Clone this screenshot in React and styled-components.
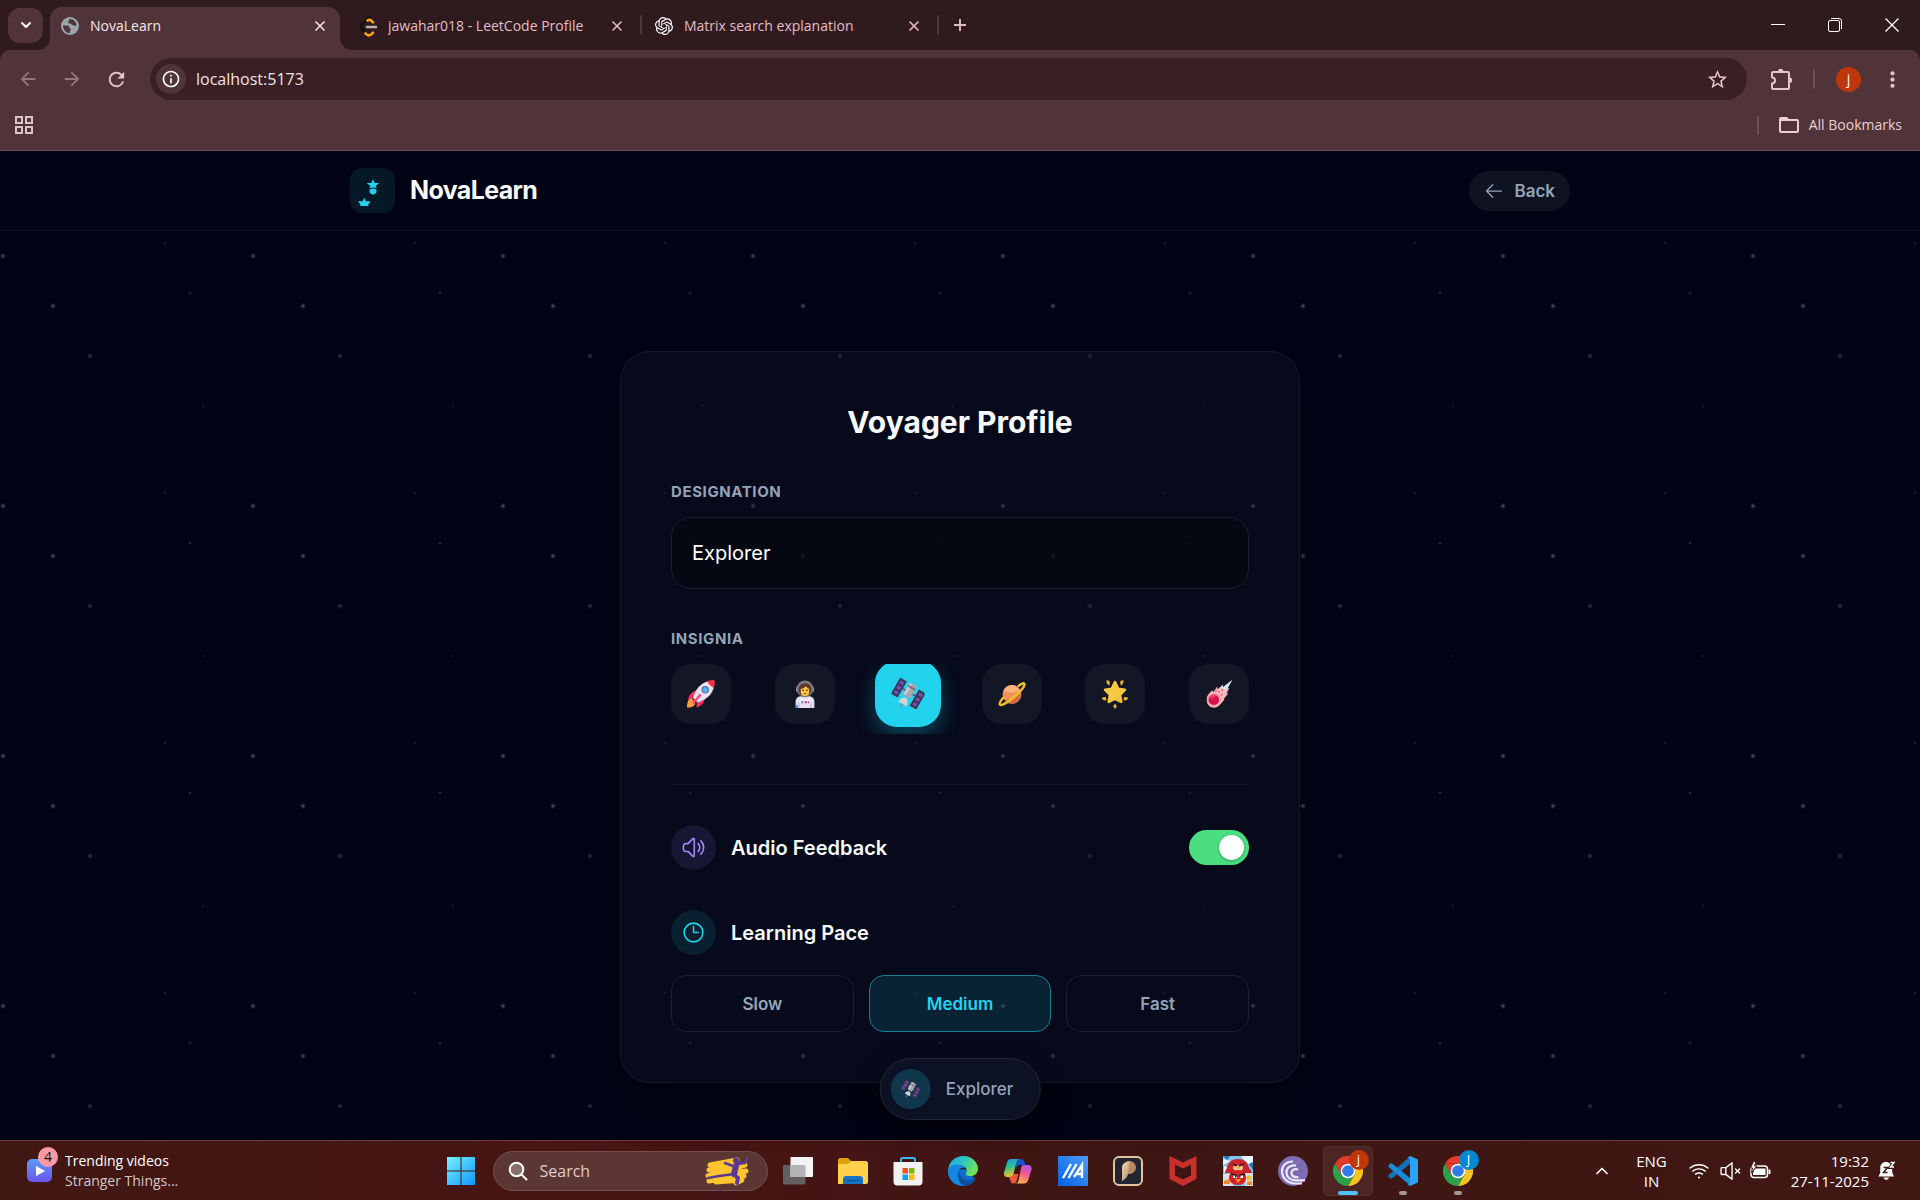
import * as React from 'react'
import styled, { createGlobalStyle, css } from 'styled-components'
import { X, Plus, ChevronDown, ChevronUp } from 'lucide-react'
import {
  MdArrowBack,
  MdArrowForward,
  MdRefresh,
  MdInfoOutline,
  MdStarOutline,
  MdMoreVert,
  MdFolderOpen,
} from 'react-icons/md'
import { SiOpenai } from 'react-icons/si'
import { HiOutlineArrowLeft, HiOutlineSpeakerWave, HiOutlineClock } from 'react-icons/hi2'
import { PiWifiHigh, PiSpeakerX } from 'react-icons/pi'

const UI_FONT = `'Open Sans', 'Noto Sans', sans-serif`
const APP_FONT = `Inter, sans-serif`

const GlobalStyle = createGlobalStyle`
  * {
    box-sizing: border-box;
  }
  body {
    margin: 0;
    background: #020415;
  }
  button,
  input {
    font: inherit;
    color: inherit;
  }
  button {
    padding: 0;
    border: 0;
    background: none;
    cursor: pointer;
  }
  svg {
    display: block;
    flex-shrink: 0;
  }
`

const Desktop = styled.div`
  display: flex;
  flex-direction: column;
  min-height: 100vh;
`

/* ---------- browser chrome ---------- */

const TabStrip = styled.div`
  display: flex;
  align-items: center;
  height: 50px;
  padding-left: 8px;
  background: #2f1a1e;
  color: #e5bcc4;
  font: 14px/20px ${UI_FONT};
`

const TabSearch = styled.button`
  display: grid;
  place-items: center;
  width: 35px;
  height: 35px;
  margin-right: 7px;
  border-radius: 12px;
  background: #50343a;
  color: #fff;
`

const Tab = styled.div`
  position: relative;
  display: flex;
  align-items: center;
  gap: 11px;
  flex: 0 1 ${({ $width }) => $width}px;
  height: 43px;
  padding: 0 12px 6px ${({ $inset }) => $inset}px;
  align-self: flex-end;
  ${({ $active }) =>
    $active &&
    css`
      color: #f6e6e9;
      background: #50343a;
      border-radius: 12px 12px 0 0;
      &::before,
      &::after {
        content: '';
        position: absolute;
        bottom: 0;
        width: 12px;
        height: 12px;
      }
      &::before {
        right: 100%;
        background: radial-gradient(circle at 0 0, transparent 12px, #50343a 12px);
      }
      &::after {
        left: 100%;
        background: radial-gradient(circle at 100% 0, transparent 12px, #50343a 12px);
      }
    `}
  > span {
    flex: 1;
    overflow: hidden;
    white-space: nowrap;
  }
`

const TabDivider = styled.i`
  width: 2px;
  height: 20px;
  margin-left: 3px;
  border-radius: 1px;
  background: #50343a;
`

const NewTab = styled.button`
  margin-left: 12px;
`

const WindowControls = styled.div`
  display: flex;
  align-self: stretch;
  margin-left: auto;
  color: #fff;
  > button {
    display: grid;
    place-items: center;
    width: 57px;
  }
`

const ToolbarBackdrop = styled.div`
  background: #2f1a1e;
`

const Toolbar = styled.div`
  border-radius: 10px 10px 0 0;
  border-bottom: 1px solid #654c50;
  background: #50343a;
  color: #e9c3ca;
`

const AddressRow = styled.div`
  display: flex;
  align-items: center;
  height: 58px;
  padding: 0 15px 0 17px;
`

const NavButton = styled.button`
  margin-right: 22px;
  opacity: ${({ disabled }) => (disabled ? 0.45 : 1)};
`

const Omnibox = styled.label`
  display: flex;
  align-items: center;
  flex: 1;
  height: 42px;
  padding: 0 18px 0 6px;
  border-radius: 21px;
  background: #382025;
  > input {
    flex: 1;
    min-width: 0;
    padding: 0 10px;
    border: 0;
    outline: 0;
    background: none;
    color: #f2e2e5;
    font: 16px/24px ${UI_FONT};
  }
`

const SiteInfo = styled.span`
  display: grid;
  place-items: center;
  width: 30px;
  height: 30px;
  border-radius: 50%;
  background: #50343a;
  color: #fff;
`

const ExtensionsButton = styled.button`
  margin: 0 20px 0 22px;
`

const ToolbarDivider = styled.i`
  width: 2px;
  height: 20px;
  border-radius: 1px;
  background: #6e4d54;
`

const ProfileButton = styled.button`
  width: 25px;
  height: 25px;
  margin: 0 19px 0 21px;
  border-radius: 50%;
  background: #bf360c;
  color: #fff;
  font: 14px/22px ${UI_FONT};
`

const BookmarkRow = styled.div`
  display: flex;
  align-items: center;
  height: 42px;
  padding: 0 18px 8px 14px;
  font: 14px/20px ${UI_FONT};
  color: #eacfd4;
  > i {
    margin: 0 18px 0 auto;
  }
  > button {
    display: flex;
    align-items: center;
    gap: 8px;
  }
`

const GlobeIcon = () => (
  <svg width="18" height="18" viewBox="0 0 18 18">
    <circle cx="9" cy="9" r="9" fill="#9aa5ac" />
    <path
      fill="#50343a"
      d="M2 8.500h4.500c1.500 0 1.800 1 1.800 2s1.500.6 1.500 1.800-1 1.600-1 3.900C4.800 16 2 12.500 2 8.500zM8 2c.8 1.500 0 2.200-1 2.600 0 1.400.6 1.800 2 1.800 1.600 0 1.200 1.600 2.600 1.600s1.600 1 3.800 1c.4-3.500-2.500-7.200-7.400-7z"
    />
  </svg>
)

const LeetCodeIcon = () => (
  <svg width="18" height="22" viewBox="0 0 18 22" fill="none" strokeWidth="2.600" strokeLinecap="round">
    <path stroke="#111" d="M11 1.500L3 9.500c-1.500 1.500-1.500 3.500 0 5l3 3" />
    <path stroke="#ffa116" d="M8.500 5.500c1.500-1 2.800-.8 4 .4l1.500 1.500M6.500 18.500c2 2.200 4.200 2.200 6 .6l1.500-1.500" />
    <path stroke="#b9b5b5" d="M8 12h9" />
  </svg>
)

const RestoreIcon = () => (
  <svg width="14" height="14" viewBox="0 0 14 14" fill="none" stroke="#fff">
    <rect x=".5" y="2.500" width="11" height="11" rx="1.500" />
    <path d="M3 .5h8a2.500 2.500 0 0 1 2.500 2.500v8" />
  </svg>
)

const AppsIcon = () => (
  <svg width="20" height="20" viewBox="0 0 20 20" fill="none" stroke="#dcc3c8" strokeWidth="2">
    <path d="M2 2h6v6H2zM12 2h6v6h-6zM2 12h6v6H2zM12 12h6v6h-6z" />
  </svg>
)

const PuzzleIcon = () => (
  <svg width="24" height="24" viewBox="0 0 24 24">
    <path
      fill="none"
      stroke="currentColor"
      strokeWidth="2"
      strokeLinejoin="round"
      d="M4 5h15a1 1 0 0 1 1 1v15a1 1 0 0 1-1 1H4a1 1 0 0 1-1-1v-4.500a3 3 0 0 0 0-6V6a1 1 0 0 1 1-1z"
    />
    <path fill="currentColor" d="M9 4.500a2.700 2.700 0 0 1 5.400 0zM20.500 10.500a2.700 2.700 0 0 1 0 5.400z" />
  </svg>
)

const CloseTab = () => (
  <button aria-label="Close tab">
    <X size={16} strokeWidth={2.5} />
  </button>
)

const Browser = () => (
  <React.Fragment>
    <TabStrip>
      <TabSearch aria-label="Search tabs">
        <ChevronDown size={16} strokeWidth={3} />
      </TabSearch>
      <Tab $active $width={290} $inset={11}>
        <GlobeIcon />
        <span>NovaLearn</span>
        <CloseTab />
      </Tab>
      <Tab $width={297} $inset={19}>
        <LeetCodeIcon />
        <span>jawahar018 - LeetCode Profile</span>
        <CloseTab />
      </Tab>
      <TabDivider />
      <Tab $width={292} $inset={13}>
        <SiOpenai size={18} color="#fff" />
        <span>Matrix search explanation</span>
        <CloseTab />
      </Tab>
      <TabDivider />
      <NewTab aria-label="New tab">
        <Plus size={18} strokeWidth={2.5} />
      </NewTab>
      <WindowControls>
        <button aria-label="Minimize">
          <svg width="14" height="2">
            <path d="M0 .5h14" stroke="#fff" />
          </svg>
        </button>
        <button aria-label="Restore">
          <RestoreIcon />
        </button>
        <button aria-label="Close">
          <svg width="14" height="14">
            <path d="M.5 .5l13 13M13.500 .5l-13 13" stroke="#fff" strokeWidth="1.300" />
          </svg>
        </button>
      </WindowControls>
    </TabStrip>
    <ToolbarBackdrop>
      <Toolbar>
        <AddressRow>
          <NavButton disabled aria-label="Back">
            <MdArrowBack size={22} />
          </NavButton>
          <NavButton disabled aria-label="Forward">
            <MdArrowForward size={22} />
          </NavButton>
          <NavButton aria-label="Reload">
            <MdRefresh size={23} />
          </NavButton>
          <Omnibox>
            <SiteInfo>
              <MdInfoOutline size={20} />
            </SiteInfo>
            <input aria-label="Address" defaultValue="localhost:5173" />
            <MdStarOutline size={23} />
          </Omnibox>
          <ExtensionsButton aria-label="Extensions">
            <PuzzleIcon />
          </ExtensionsButton>
          <ToolbarDivider />
          <ProfileButton>j</ProfileButton>
          <button aria-label="Menu">
            <MdMoreVert size={25} />
          </button>
        </AddressRow>
        <BookmarkRow>
          <button aria-label="Apps">
            <AppsIcon />
          </button>
          <ToolbarDivider />
          <button>
            <MdFolderOpen size={24} />
            All Bookmarks
          </button>
        </BookmarkRow>
      </Toolbar>
    </ToolbarBackdrop>
  </React.Fragment>
)

/* ---------- NovaLearn page ---------- */

const Page = styled.div`
  position: relative;
  flex: 1;
  display: flex;
  flex-direction: column;
  font: 17px/26px ${APP_FONT};
  color: #f8fafc;
  background:
    radial-gradient(3px 3px at 53px 155px, rgba(255, 255, 255, 0.3), transparent),
    radial-gradient(3px 3px at 3px 105px, rgba(255, 255, 255, 0.3), transparent),
    radial-gradient(3px 3px at 90px 205px, rgba(255, 255, 255, 0.2), transparent),
    radial-gradient(2px 1px at 190px 142px, rgba(255, 255, 255, 0.3), transparent),
    radial-gradient(2px 1px at 165px 92px, rgba(255, 255, 255, 0.2), transparent),
    radial-gradient(1px 2px at 203px 5px, rgba(255, 255, 255, 0.15), transparent),
    #020415;
  background-size: 250px 250px;
`

const Header = styled.header`
  border-bottom: 1px solid #0e111f;
  background: #020415;
  > div {
    display: flex;
    align-items: center;
    justify-content: space-between;
    max-width: 1220px;
    height: 79px;
    margin: 0 auto;
  }
`

const Brand = styled.a`
  display: flex;
  align-items: center;
  gap: 15px;
  color: #f8fafc;
  font-size: 25px;
  line-height: 35px;
  font-weight: 700;
  letter-spacing: -0.025em;
  text-decoration: none;
`

const BackButton = styled.button`
  display: flex;
  align-items: center;
  gap: 10px;
  height: 40px;
  padding: 0 15px;
  border-radius: 20px;
  background: #0f121f;
  color: #94a3b8;
  font-weight: 600;
`

const Main = styled.main`
  flex: 1;
  padding: 120px 24px 56px;
`

const Card = styled.section`
  max-width: 680px;
  margin: 0 auto;
  padding: 50px;
  border: 1px solid rgba(255, 255, 255, 0.06);
  border-radius: 30px;
  background: rgba(20, 28, 46, 0.27);
  box-shadow: 0 25px 50px -12px rgba(0, 0, 0, 0.4);
  > h1 {
    margin: 0 0 40px;
    font-size: 30px;
    line-height: 40px;
    font-weight: 700;
    text-align: center;
  }
`

const FieldLabel = styled.label`
  display: block;
  margin-bottom: 15px;
  color: #94a3b8;
  font-size: 15px;
  line-height: 20px;
  font-weight: 700;
  letter-spacing: 0.04em;
  text-transform: uppercase;
`

const NameInput = styled.input`
  display: block;
  width: 100%;
  height: 72px;
  margin-bottom: 40px;
  padding: 0 20px;
  border: 1px solid #1c1f2b;
  border-radius: 20px;
  outline: 0;
  background: rgba(5, 6, 14, 0.65);
  color: #fff;
  font-size: 20px;
`

const InsigniaRow = styled.div`
  display: flex;
  justify-content: space-between;
  padding-bottom: 10px;
  margin-bottom: 50px;
  overflow: hidden;
`

const Insignia = styled.button`
  display: grid;
  place-items: center;
  width: 60px;
  height: 60px;
  border-radius: 20px;
  background: #131725;
  ${({ $selected }) =>
    $selected &&
    css`
      transform: scale(1.1);
      background: #22d3ee;
      box-shadow: 0 8px 18px rgba(34, 211, 238, 0.3);
    `}
`

const Settings = styled.div`
  display: grid;
  gap: 40px;
  padding-top: 40px;
  border-top: 1px solid #121726;
`

const SettingRow = styled.div`
  display: flex;
  align-items: center;
  gap: 15px;
  font-size: 20px;
  line-height: 28px;
  font-weight: 600;
  > label {
    flex: 1;
  }
`

const IconDisc = styled.span`
  display: grid;
  place-items: center;
  width: 45px;
  height: 45px;
  border-radius: 50%;
  color: ${({ $color }) => $color};
  background: ${({ $bg }) => $bg};
`

const Toggle = styled.input`
  appearance: none;
  width: 60px;
  height: 35px;
  margin: 0;
  padding: 5px;
  border-radius: 18px;
  background: #334155;
  cursor: pointer;
  &::before {
    content: '';
    display: block;
    width: 25px;
    height: 25px;
    border-radius: 50%;
    background: #fff;
    box-shadow: 0 1px 3px rgba(0, 0, 0, 0.3);
  }
  &:checked {
    background: #4ade80;
  }
  &:checked::before {
    margin-left: 25px;
  }
`

const PaceOptions = styled.div`
  display: grid;
  grid-template-columns: repeat(3, 1fr);
  gap: 15px;
  margin-top: 20px;
`

const PaceButton = styled.button`
  height: 57px;
  border: 1px solid ${({ $selected }) => ($selected ? '#157f93' : '#1c202f')};
  border-radius: 15px;
  background: ${({ $selected }) => ($selected ? 'rgba(34, 211, 238, 0.12)' : 'transparent')};
  color: ${({ $selected }) => ($selected ? '#22d3ee' : '#94a3b8')};
  font-weight: 600;
`

/* floats over the bottom edge of the card */
const ProfilePill = styled.div`
  position: absolute;
  bottom: 20px;
  left: 50%;
  transform: translateX(-50%);
  display: flex;
  align-items: center;
  gap: 15px;
  height: 62px;
  padding: 0 26px 0 10px;
  border: 1px solid #20253a;
  border-radius: 31px;
  background: #0c1124;
  box-shadow: 0 10px 25px rgba(0, 0, 0, 0.5);
  color: #94a3b8;
  font-weight: 500;
  > ${IconDisc} {
    width: 40px;
    height: 40px;
  }
`

const LogoMark = () => (
  <svg width="45" height="45" viewBox="0 0 45 45" fill="#22d3ee">
    <rect width="45" height="45" rx="12" fill="#041827" />
    <path d="M23 11l1.700 4h4.600l-3.600 2.900 1 2.600c-2.200-1.300-5.200-1.300-7.400 0l1-2.600-3.600-2.900h4.600z" />
    <path d="M23 20.500c1.300 0 2.500.5 3.500 1.500.3 2.300-1.200 4.500-3.500 4.500s-3.800-2.200-3.500-4.500c1-1 2.200-1.500 3.500-1.500z" />
    <path d="M14.300 29.700l1.700 3.600h4.600l-2.200 3-.2 1.700h-7.800l-.2-1.700-2.200-3h4.600z" />
  </svg>
)

const Rocket = () => (
  <svg width="30" height="30" viewBox="0 0 32 32">
    <path fill="#ff9a3d" d="M6 20c-4 1.500-5 6-5 10.500 4 0 8-1 9-4.500z" />
    <path fill="#f92f60" d="M12 12c-6 1-8.500 5-10 10l6-2zM20 20c-.5 6-4 9-9 10.500l1-6.500z" />
    <path fill="#8a1f4f" d="M8 20l5 5-1.500 1-4-4z" />
    <path fill="#e9e4ef" d="M30 2C19 1.500 11 8 7.500 20l5 5C24 21 31 13 30 2z" />
    <path fill="#c5bdd0" d="M30 8c-1 8-8 14-18 16l.5 1C23 21.500 30 15 30 8z" />
    <path fill="#f92f47" d="M30.500 1.500c-3-.3-6 .1-8 1 1.500 3 4 5.500 7 7 1-2.500 1.300-5 1-8z" />
    <circle cx="20.500" cy="11.500" r="4" fill="#5d6b9c" />
    <circle cx="20.500" cy="11.500" r="2.800" fill="#4fb3f6" />
    <path fill="#ff4a7c" d="M14.500 15.500l2 2-8.500 9.500-1.500-1.500z" />
  </svg>
)

const Astronaut = () => (
  <svg width="30" height="30" viewBox="0 0 32 32">
    <path fill="#e6e0f3" d="M6 31v-7c0-3.500 3-5.500 6-5.500h8c3 0 6 2 6 5.500v7z" />
    <path fill="#cbc2de" d="M9.500 25v6M22.500 25v6" stroke="#b8aed0" />
    <rect x="6.500" y="7" width="19" height="8" rx="4" fill="#b9b0c4" />
    <circle cx="16" cy="10.500" r="9" fill="#7c7880" />
    <circle cx="16" cy="11.500" r="7" fill="#5a3528" />
    <path fill="#ffc83d" d="M11.500 10.500c2.500 0 4.500-1.500 5.500-3 .6 1.500 1.800 2.600 3.500 3v4c0 2.600-2 4-4.500 4s-4.500-1.400-4.500-4z" />
    <circle cx="14" cy="12" r=".9" fill="#402a32" />
    <circle cx="18" cy="12" r=".9" fill="#402a32" />
    <path d="M14.800 15.300c.8.700 1.600.7 2.400 0" stroke="#d52c4c" strokeWidth="1.300" fill="none" />
    <path fill="#f7f4fb" d="M10.500 20c3 2.500 8 2.500 11 0v5c-3 2-8 2-11 0z" />
    <path fill="#3f8ef0" d="M12 23.500h2V26h-2zM6 28h2.500v3H6z" />
    <path fill="#f2426b" d="M15.500 23.500H18V26h-2.500z" />
    <path fill="#8b5cf6" d="M19 23.500h1.500V26H19z" />
  </svg>
)

const Satellite = ({ size = 30 }) => (
  <svg width={size} height={size} viewBox="0 0 32 32">
    <g transform="rotate(30 16 16)">
      <path stroke="#5e5666" strokeWidth="1.500" d="M7 14h18" />
      <path fill="#403550" d="M1.500 6H9v18H1.500zM23 7h7.500v18H23z" />
      <path
        fill="#6d4fb8"
        d="M3.300 8h4v3.400h-4zM3.300 13.300h4v3.400h-4zM3.300 18.600h4V22h-4zM24.800 9h4v3.400h-4zM24.800 14.300h4v3.400h-4zM24.800 19.600h4V23h-4z"
      />
      <rect x="12" y="5" width="8" height="14" rx="1" fill="#a9a6ad" />
      <path fill="#c9c6cd" d="M12 6h3v12h-3z" />
      <path fill="#77747c" d="M12 8h8v2h-8z" />
      <path fill="#d3d0d8" d="M11.500 27c0-4 2-6.500 4.500-6.500s4.500 2.500 4.500 6.500z" />
      <path stroke="#8a8790" strokeWidth="1.500" d="M16 27v4" />
    </g>
  </svg>
)

const Planet = () => (
  <svg width="30" height="30" viewBox="0 0 32 32">
    <circle cx="16" cy="16.500" r="10" fill="#f3905a" />
    <path fill="#f9b27c" d="M7 12c2-4 7-6.500 11-5.300 3 1 5 3 6 5.300-5 3-11 4-17 0z" />
    <path fill="#d86b4a" d="M8 22c5 1 11-1 17-7 1 5-2 10-7 11.300-4 .7-8-1-10-4.300z" />
    <path
      fill="none"
      stroke="#f0c02c"
      strokeWidth="2.600"
      strokeLinecap="round"
      d="M23 7.500c3-2.500 5.200-3.600 6-2.600 1.600 1.700-3.300 8-10.500 14S4.600 28.900 3.200 27.300c-.9-1 .6-4 3.500-7.300"
    />
  </svg>
)

const GlowingStar = () => (
  <svg width="30" height="30" viewBox="0 0 32 32" strokeLinejoin="round">
    <path
      fill="#f6c945"
      stroke="#f6c945"
      strokeWidth="3"
      d="M16 3.500l3.300 7 7.200 1-5.300 5.300 1.400 7.400L16 20.800l-6.600 3.400 1.400-7.400L5.500 11.500l7.200-1z"
    />
    <path fill="#e2a52a" d="M16 20l6 4-1-6c2-2.200 4-4 5-6-1 5-4 6-5 8s-2 .5-5 0z" opacity=".6" />
    <path
      fill="#f0b429"
      d="M7 1l3.500 1.500L10 7C7.500 6 6.500 3.500 7 1zM25 1l-3.500 1.500L22 7c2.500-1 3.500-3.500 3-6zM2 20l4-1 1 3.500C4.500 23.500 2.500 22.500 2 20zM30 20l-4-1-1 3.500c2.500 1 4.500 0 5-2.500zM16 26l2 3-2 3-2-3z"
    />
  </svg>
)

const Comet = () => (
  <svg width="30" height="30" viewBox="0 0 32 32">
    <path
      fill="#f5b8bd"
      d="M3 21c0-4 4-7 6-9l1 2 4-6 .5 3L20 6v3l10-8-5 9 2-.5-3 6 2-.3-5 6 1 .3-5 6c-3 3.500-8 4-11 1.500-2-1.500-3-3.500-3-6z"
    />
    <path fill="#cfeaf3" d="M20 6v3l10-8-5 9-4 2-3-3z" />
    <circle cx="10.500" cy="22" r="7.300" fill="#f7a3a8" />
    <circle cx="10.500" cy="22" r="5.600" fill="#d6134f" />
    <path fill="#f23b62" d="M6 20c1-2.500 4-4 6.500-3C12 20 9 22 6 20z" />
    <path fill="#e8476c" d="M15 13h1.500v1.500H15zM18 16h1.500v1.500H18zM12 12h1.500v1.500H12zM19 11h1.500v1.500H19z" />
  </svg>
)

const INSIGNIA = [
  { name: 'Rocket', Icon: Rocket },
  { name: 'Astronaut', Icon: Astronaut },
  { name: 'Satellite', Icon: Satellite },
  { name: 'Planet', Icon: Planet },
  { name: 'Star', Icon: GlowingStar },
  { name: 'Comet', Icon: Comet },
]

const ProfilePage = () => {
  const [name, setName] = React.useState('Explorer')
  const [insignia, setInsignia] = React.useState('Satellite')
  const [audio, setAudio] = React.useState(true)
  const [pace, setPace] = React.useState('Medium')
  const { Icon: Current } = INSIGNIA.find(i => i.name === insignia)

  return (
    <Page>
      <Header>
        <div>
          <Brand href="#">
            <LogoMark />
            NovaLearn
          </Brand>
          <BackButton>
            <HiOutlineArrowLeft size={20} />
            Back
          </BackButton>
        </div>
      </Header>
      <Main>
        <Card>
          <h1>Voyager Profile</h1>
          <FieldLabel htmlFor="designation">Designation</FieldLabel>
          <NameInput
            id="designation"
            value={name}
            onChange={e => setName(e.target.value)}
          />
          <FieldLabel as="div" id="insignia">
            Insignia
          </FieldLabel>
          <InsigniaRow role="group" aria-labelledby="insignia">
            {INSIGNIA.map(({ name, Icon }) => (
              <Insignia
                key={name}
                aria-label={name}
                $selected={name === insignia}
                onClick={() => setInsignia(name)}
              >
                <Icon />
              </Insignia>
            ))}
          </InsigniaRow>
          <Settings>
            <SettingRow>
              <IconDisc $color="#a78bfa" $bg="#161733">
                <HiOutlineSpeakerWave size={25} />
              </IconDisc>
              <label htmlFor="audio">Audio Feedback</label>
              <Toggle
                id="audio"
                type="checkbox"
                checked={audio}
                onChange={e => setAudio(e.target.checked)}
              />
            </SettingRow>
            <div>
              <SettingRow>
                <IconDisc $color="#22d3ee" $bg="#082030">
                  <HiOutlineClock size={25} />
                </IconDisc>
                <span id="pace">Learning Pace</span>
              </SettingRow>
              <PaceOptions role="group" aria-labelledby="pace">
                {['Slow', 'Medium', 'Fast'].map(p => (
                  <PaceButton key={p} $selected={p === pace} onClick={() => setPace(p)}>
                    {p}
                  </PaceButton>
                ))}
              </PaceOptions>
            </div>
          </Settings>
        </Card>
      </Main>
      <ProfilePill>
        <IconDisc $bg="#10364c">
          <Current size={20} />
        </IconDisc>
        {name}
      </ProfilePill>
    </Page>
  )
}

/* ---------- taskbar ---------- */

const Bar = styled.footer`
  display: grid;
  grid-template-columns: 1fr auto 1fr;
  align-items: center;
  height: 60px;
  padding: 0 24px 0 27px;
  border-top: 1px solid #6a3d36;
  background: linear-gradient(90deg, #411713, #471414 35%, #3d1613 60%, #411713);
  color: #fff;
  font: 14px/20px ${UI_FONT};
`

const Widget = styled.button`
  display: flex;
  align-items: center;
  gap: 13px;
  text-align: left;
  white-space: nowrap;
  small {
    display: block;
    font-size: 14px;
    color: #d8c6c4;
  }
`

const WidgetIcon = styled.span`
  position: relative;
  > b {
    position: absolute;
    top: -11px;
    right: -6px;
    width: 20px;
    height: 20px;
    border-radius: 50%;
    background: #ff99a4;
    color: #111;
    font-weight: 400;
    text-align: center;
  }
`

const Pinned = styled.div`
  display: flex;
  align-items: center;
  padding-right: 10px;
`

const PinnedApp = styled.button`
  position: relative;
  display: grid;
  place-items: center;
  width: 50px;
  height: 50px;
  margin-left: 5px;
  border-radius: 6px;
  ${({ $active }) =>
    $active &&
    css`
      background: #4d2623;
      box-shadow: inset 0 0 0 1px #57302d;
    `}
  ${({ $running, $active }) =>
    $running &&
    css`
      &::after {
        content: '';
        position: absolute;
        bottom: 1px;
        width: ${$active ? 20 : 8}px;
        height: 4px;
        border-radius: 2px;
        background: ${$active ? '#4cc2ff' : '#a89391'};
      }
    `}
`

const AccountBadge = styled.b`
  position: absolute;
  top: 4px;
  right: 4px;
  width: 20px;
  height: 20px;
  border-radius: 50%;
  background: ${({ $color }) => $color};
  color: #fff;
  font-size: 13px;
  font-weight: 400;
  line-height: 18px;
  text-align: center;
`

const SearchBox = styled.label`
  display: flex;
  align-items: center;
  gap: 12px;
  width: 275px;
  height: 40px;
  margin: 0 0 0 7px;
  padding: 0 17px 0 14px;
  border: 1px solid #73504d;
  border-radius: 20px;
  background: #5c3633;
  > input {
    flex: 1;
    min-width: 0;
    padding: 0;
    border: 0;
    outline: 0;
    background: none;
    font-size: 16px;
    &::placeholder {
      color: #dccfce;
    }
  }
`

const Tray = styled.div`
  display: flex;
  align-items: center;
  justify-content: flex-end;
  > * {
    margin-left: 9px;
  }
`

const Language = styled.button`
  margin: 0 12px 0 24px;
  font-size: 15px;
  line-height: 20px;
  text-align: center;
`

const Clock = styled.button`
  margin-left: 20px;
  font-size: 15px;
  line-height: 20px;
  text-align: right;
`

const WidgetGlyph = () => (
  <svg width="25" height="25" viewBox="0 0 25 25">
    <defs>
      <linearGradient id="wg" x2="0" y2="1">
        <stop stopColor="#5c9bff" />
        <stop offset="1" stopColor="#6a55f0" />
      </linearGradient>
    </defs>
    <rect y="1" width="25" height="23" rx="5" fill="url(#wg)" />
    <path fill="#fff" d="M9 8l9 5-9 5z" />
  </svg>
)

const StartGlyph = () => (
  <svg width="30" height="30" viewBox="0 0 30 30">
    <defs>
      <linearGradient id="start" gradientUnits="userSpaceOnUse" x1="0" y1="0" x2="30" y2="30">
        <stop stopColor="#7df3ff" />
        <stop offset="1" stopColor="#0a94ff" />
      </linearGradient>
    </defs>
    <path fill="url(#start)" d="M1 1h13.500v13.500H1zM15.500 1H29v13.500H15.500zM1 15.500h13.500V29H1zM15.500 15.500H29V29H15.500z" />
  </svg>
)

const SearchGlyph = () => (
  <svg width="20" height="20" viewBox="0 0 20 20" fill="none" stroke="#fff" strokeWidth="2" strokeLinecap="round">
    <circle cx="8.500" cy="8.500" r="6.800" fill="#8a6f6d" />
    <path d="M13.500 13.500l5 5" />
  </svg>
)

const KickGlyph = () => (
  <svg width="46" height="30" viewBox="0 0 46 30" strokeLinecap="round" strokeLinejoin="round">
    <path
      fill="none"
      stroke="#ffc42e"
      strokeWidth="5"
      d="M6 9L33 4 5 14l36-5L4 20l38-5L5 25l35-5-28 6 26-2-6 3"
    />
    <g stroke="#5b3a94" fill="none">
      <path strokeWidth="6" d="M32 10l-2 8" />
      <path strokeWidth="2.500" d="M34 8l7-1 2-5M29 10l-8-3M30 18l-15 2-11 2" />
      <path strokeWidth="4" d="M29 18l5 4-1 5" />
    </g>
    <circle cx="32" cy="4.500" r="3" fill="#5b3a94" />
  </svg>
)

const TaskViewGlyph = () => (
  <svg width="30" height="30" viewBox="0 0 30 30">
    <rect y="9" width="22.500" height="19.500" rx="1" fill="#626060" />
    <rect x="7.500" y="1" width="22.500" height="20" rx="1" fill="#f3f3f3" />
    <path fill="#b5b4b4" d="M7.500 9h15v12h-15z" />
  </svg>
)

const ExplorerGlyph = () => (
  <svg width="30" height="30" viewBox="0 0 30 30">
    <path fill="#e0a00c" d="M0 4c0-1 1-2 2-2h8l3 3h15v8H0z" />
    <path fill="#ffd04a" d="M0 8h10l3-3h15c1 0 2 1 2 2v19c0 1-1 2-2 2H0z" />
    <path fill="#1373c4" d="M5 28v-5c0-1.700 1.300-3 3-3h14c1.700 0 3 1.300 3 3v5z" />
    <path stroke="#0b4f91" d="M8.500 24.500h13" />
  </svg>
)

const StoreGlyph = () => (
  <svg width="30" height="30" viewBox="0 0 30 30">
    <path fill="none" stroke="#37b6ee" strokeWidth="2" d="M8 7V3.500C8 2.500 8.500 2 9.500 2h11c1 0 1.500.5 1.500 1.500V7" />
    <path fill="#f1f1f1" d="M.5 7c0-.8.5-1 1-1h27c.6 0 1 .3 1 1v18.500a4 4 0 0 1-4 4h-21a4 4 0 0 1-4-4z" />
    <path fill="#f25022" d="M9.500 12H15v5.500H9.500z" />
    <path fill="#7fba00" d="M16 12h5.500v5.500H16z" />
    <path fill="#00a4ef" d="M9.500 18.500H15V24H9.500z" />
    <path fill="#ffb900" d="M16 18.500h5.500V24H16z" />
  </svg>
)

const EdgeGlyph = () => (
  <svg width="30" height="30" viewBox="0 0 30 30">
    <defs>
      <linearGradient id="edge" x2="1" y2=".4">
        <stop stopColor="#1ba5e0" />
        <stop offset=".5" stopColor="#2bc3c9" />
        <stop offset="1" stopColor="#6ae35a" />
      </linearGradient>
    </defs>
    <path fill="#0c6fd0" d="M0 15a15 15 0 0 0 15 15c5 0 10-2.500 12.500-7l-11-10z" />
    <path
      fill="url(#edge)"
      d="M0 14C1 5 8 0 15 0c9 0 15 6.500 15 12.500 0 5-3.500 7.500-7.500 7.500-4 0-5-1.500-4.500-2.700 1.500-2 1-7.300-5.500-7.300C6 10 1 12 0 14z"
    />
    <path fill="#1487e0" d="M0 15c0-4 5-7 11-6.500 3 .3 5 1.500 6 3.500-4-1.500-7.500 2-7.500 6.500 0 5 3 9.500 7.500 11.300C7 30.500 0 24 0 15z" />
    <path fill="#0d4f9c" d="M12 15c-1 5 3 9.500 8 9.500 3.500 0 5.500-2 7.500-3-1.500 5-6.500 8.500-11 8.300-5-1-8.500-9.300-4.500-14.800z" />
  </svg>
)

const CopilotGlyph = () => (
  <svg width="30" height="30" viewBox="0 0 30 30">
    <defs>
      <linearGradient id="cpl" x2=".3" y2="1">
        <stop stopColor="#1b8df0" />
        <stop offset=".5" stopColor="#2fc28c" />
        <stop offset="1" stopColor="#f4c325" />
      </linearGradient>
      <linearGradient id="cpr" x1="1" x2=".6" y2="1">
        <stop stopColor="#9a5cf5" />
        <stop offset=".5" stopColor="#f0509a" />
        <stop offset="1" stopColor="#ffa44f" />
      </linearGradient>
    </defs>
    <path fill="#1454c8" d="M11 3h7c2 0 3 1 3.500 3l1 3h-5c-3 0-3.500 1-4 3z" />
    <path fill="url(#cpl)" d="M8 3h9c-2 0-3 1-3.500 3l-3 12c-.6 2-1.500 3-4 3H4c-2.500 0-3.500-2-3-4.500l3-10C4.700 4 6 3 8 3z" />
    <path fill="url(#cpr)" d="M21 9h4c3 0 4 2 3.500 4.500l-3 10c-.7 2.500-2.500 4-4.500 4h-9c2 0 3-1 3.500-3l2.500-12C18.600 10.500 19 9 21 9z" />
    <path fill="#f0583a" d="M6 21c3 0 4-1 4.500-3h5l-2 7c-.6 1.800-1.500 2.500-3 2.500S8 27 7.500 25z" />
  </svg>
)

const ArmouryGlyph = () => (
  <svg width="30" height="30" viewBox="0 0 30 30">
    <defs>
      <linearGradient id="my" x1="0" y1="1" x2="1" y2="0">
        <stop stopColor="#0562e0" />
        <stop offset="1" stopColor="#4c9bf8" />
      </linearGradient>
    </defs>
    <path fill="url(#my)" d="M0 0h30v30H0z" />
    <path stroke="#fff" strokeWidth="2.400" d="M5 22L13 8M10.500 22L18.500 8" />
    <path fill="none" stroke="#fff" strokeWidth="2.400" d="M16 21l8-12v13M19 18h5" />
  </svg>
)

const PhotoGlyph = () => (
  <svg width="30" height="30" viewBox="0 0 30 30">
    <defs>
      <linearGradient id="pg" x2="1" y2="1">
        <stop stopColor="#f2d9b8" />
        <stop offset="1" stopColor="#b98a5d" />
      </linearGradient>
    </defs>
    <rect x="1" y="1" width="28" height="28" rx="5" fill="#20252f" stroke="#e2c4a0" strokeWidth="2" />
    <circle cx="16.500" cy="11.500" r="6.500" fill="#b78a60" />
    <path fill="url(#pg)" d="M9 25V12c0-4 3-6.500 7-6.500 2 0 0 3 0 6 0 7-2 11-7 13.500z" />
  </svg>
)

const McAfeeGlyph = () => (
  <svg width="28" height="30" viewBox="0 0 28 30">
    <path fill="#c8302e" d="M.5 0L14 6.500 27.500 0v23L14 30 .5 23zM6 8.500v11l8 4 8-4v-11l-8 4z" />
  </svg>
)

const BirdsGlyph = () => (
  <svg width="30" height="30" viewBox="0 0 30 30">
    <path fill="#7cc4e8" d="M0 0h30v30H0z" />
    <path fill="#e9f4fa" d="M0 3l8 2-8 4zM18 0h12v7l-6 1zM1 10l5 2-5 5z" />
    <path fill="#d8dfe6" d="M0 18h10v12H0zM22 17h8v13h-8z" />
    <path fill="#2c6fb0" d="M0 0h7l-3 4zM26 8l4-2v8z" />
    <path fill="#c9252b" d="M4 12c1-6 5-9 11-9s10 3 11 9c1 2 3 3 3 5H2c0-2 1-3 2-5z" />
    <path fill="#f2c9a8" d="M10 11c2-2 8-2 10 0 0 3-2 4-5 4s-5-1-5-4z" />
    <path fill="#1c1013" d="M8 7l6 2v2zM22 7l-6 2v2z" />
    <path fill="#f5b52e" d="M13 10l5 1-4 3z" />
    <path fill="#d81f26" d="M6 22c0-5 4-8 9-8s8 4 8 8c0 4-3 7-8 7s-9-3-9-7z" />
    <path fill="#fff" d="M10 19h4v3h-4zM16 19h4v3h-4z" />
    <path fill="#1c1013" d="M8 17l6 2v1l-6-1zM22 17l-6 2v1l6-1zM12 20h1.500v1.500H12zM16 20h1.500v1.500H16z" />
    <path fill="#f5a623" d="M12 23l6 0-3 4z" />
    <circle cx="26" cy="22" r="2.500" fill="#f0c02c" />
    <path fill="#f08a24" d="M1 25l5-2 1 5H1zM24 26l5-1v4h-5z" />
  </svg>
)

const TorrentGlyph = () => (
  <svg width="30" height="30" viewBox="0 0 30 30" fill="none" stroke="#ece8f7" strokeWidth="2.200">
    <circle cx="15" cy="15" r="15" fill="#7d6cb4" stroke="none" />
    <path d="M15 5.500C7 5.500 3.500 11 4 16c.5 6 5 11 12 11.500h8M18 9.500c-6-1-10 3-9.500 7.500.5 5 5 7.500 10 7.300h8.500M20 13.500c-4-1-7 .8-6.500 4 .4 3 3 4 7 3.700" />
  </svg>
)

const ChromeGlyph = () => (
  <svg width="30" height="30" viewBox="0 0 30 30">
    <path fill="#e33b2e" d="M2 7.500a15 15 0 0 1 26 0H15z" />
    <path fill="#e33b2e" d="M2 7.500l6.500 11.300L15 7.500z" />
    <path fill="#fcc31e" d="M28 7.500a15 15 0 0 1-13 22.500l6.500-11.300L15 7.500z" />
    <path fill="#2ca14c" d="M2 7.500a15 15 0 0 0 13 22.500l6.500-11.200H8.500z" />
    <circle cx="15" cy="15" r="7.300" fill="#fff" />
    <circle cx="15" cy="15" r="5.800" fill="#2f7bea" />
  </svg>
)

const CodeGlyph = () => (
  <svg width="30" height="30" viewBox="0 0 30 30">
    <path fill="#1272b8" d="M.6 19L22 .5v7.500L4 22.500c-.5.400-1 .4-1.400 0L.6 20.800c-.6-.5-.6-1.200 0-1.800z" />
    <path fill="#1b8ad8" d="M.6 11L22 29.500V22L4 7.500c-.5-.4-1-.4-1.400 0L.6 9.200c-.6.5-.6 1.200 0 1.800z" />
    <path fill="#2aa4f2" d="M22 0l7 3c.6.300 1 .8 1 1.500v21c0 .7-.4 1.200-1 1.500l-7 3-3-2c1.700.7 3-.5 3-2V4c0-1.500-1.300-2.700-3-2z" />
  </svg>
)

const BatteryGlyph = () => (
  <svg width="21" height="20" viewBox="0 0 21 20">
    <rect x="1" y="5" width="16.500" height="11.500" rx="3" fill="none" stroke="#fff" strokeWidth="1.500" />
    <path fill="#fff" d="M5 7.500h10.500v6.500H3v-2zM18.500 8.500h1c.6 0 1 .5 1 1v2.500c0 .5-.4 1-1 1h-1z" />
    <path fill="#fff" stroke="#411713" strokeWidth="1" d="M3.500.5L.5 7h2L1.500 11.500 7 5H4.500L6 .5z" />
  </svg>
)

const BellGlyph = () => (
  <svg width="18" height="20" viewBox="0 0 18 20">
    <path fill="#fff" d="M8 1C4.500 1 2.300 3.500 2.300 6.500v5L.5 15.500h15.500l-1.800-4v-4C13 3 11 1 8 1zM5.500 16.500h5.500c-.5 1.600-1.500 2.300-2.700 2.300s-2.300-.7-2.800-2.300z" />
    <path fill="none" stroke="#411713" strokeWidth="1.500" d="M5.500 6.500h4l-4 5h4" />
    <path fill="none" stroke="#411713" strokeWidth="3" d="M12 1.500h4l-4 5h4" />
    <path fill="none" stroke="#fff" strokeWidth="1.500" d="M12.500 1.500H16l-3.500 4.500H16" />
  </svg>
)

const PINNED = [
  { name: 'Task View', Icon: TaskViewGlyph },
  { name: 'File Explorer', Icon: ExplorerGlyph },
  { name: 'Microsoft Store', Icon: StoreGlyph },
  { name: 'Edge', Icon: EdgeGlyph },
  { name: 'Copilot', Icon: CopilotGlyph },
  { name: 'MyASUS', Icon: ArmouryGlyph },
  { name: 'Perspective', Icon: PhotoGlyph },
  { name: 'McAfee', Icon: McAfeeGlyph },
  { name: 'Angry Birds', Icon: BirdsGlyph },
  { name: 'BitTorrent', Icon: TorrentGlyph },
  { name: 'Chrome (j)', Icon: ChromeGlyph, running: true, active: true, badge: 'j', color: '#bf360c' },
  { name: 'Visual Studio Code', Icon: CodeGlyph, running: true },
  { name: 'Chrome (J)', Icon: ChromeGlyph, running: true, badge: 'J', color: '#0288d1' },
]

const Taskbar = () => (
  <Bar>
    <Widget>
      <WidgetIcon>
        <WidgetGlyph />
        <b>4</b>
      </WidgetIcon>
      <span>
        Trending videos
        <small>Stranger Things...</small>
      </span>
    </Widget>
    <Pinned>
      <PinnedApp aria-label="Start">
        <StartGlyph />
      </PinnedApp>
      <SearchBox>
        <SearchGlyph />
        <input aria-label="Search" placeholder="Search" />
        <KickGlyph />
      </SearchBox>
      {PINNED.map(({ name, Icon, running, active, badge, color }) => (
        <PinnedApp key={name} aria-label={name} $running={running} $active={active}>
          <Icon />
          {badge && <AccountBadge $color={color}>{badge}</AccountBadge>}
        </PinnedApp>
      ))}
    </Pinned>
    <Tray>
      <button aria-label="Hidden icons">
        <ChevronUp size={20} />
      </button>
      <Language>
        ENG
        <br />
        IN
      </Language>
      <PiWifiHigh size={22} />
      <PiSpeakerX size={22} />
      <BatteryGlyph />
      <Clock>
        19:32
        <br />
        27-11-2025
      </Clock>
      <BellGlyph />
    </Tray>
  </Bar>
)

const App = () => (
  <Desktop>
    <GlobalStyle />
    <Browser />
    <ProfilePage />
    <Taskbar />
  </Desktop>
)

export default App
